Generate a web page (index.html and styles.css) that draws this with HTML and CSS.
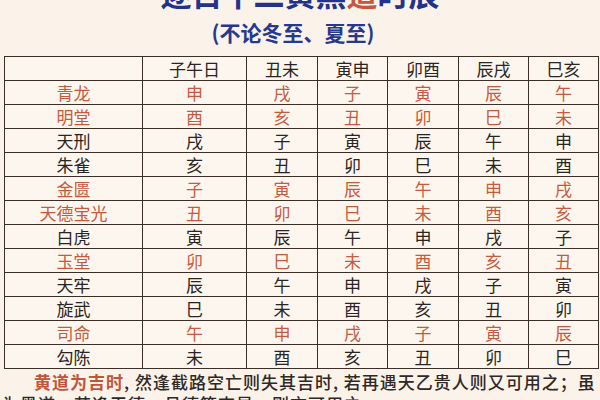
FILE: index.html
```html
<!DOCTYPE html>
<html lang="zh">
<head>
<meta charset="utf-8">
<link rel="stylesheet" href="styles.css">
</head>
<body>
<div class="page">
  <h1 class="title">逐日十二黄黑<span class="hl">道</span>时辰</h1>
  <div class="subtitle">(不论冬至、夏至)</div>
  <table class="grid">
    <colgroup>
      <col class="c1"><col class="c2"><col class="c3"><col class="c4"><col class="c5"><col class="c6"><col class="c7">
    </colgroup>
    <tr><td></td><td>子午日</td><td>丑未</td><td>寅申</td><td>卯酉</td><td>辰戌</td><td>巳亥</td></tr>
    <tr class="red"><td>青龙</td><td>申</td><td>戌</td><td>子</td><td>寅</td><td>辰</td><td>午</td></tr>
    <tr class="red"><td>明堂</td><td>酉</td><td>亥</td><td>丑</td><td>卯</td><td>巳</td><td>未</td></tr>
    <tr><td>天刑</td><td>戌</td><td>子</td><td>寅</td><td>辰</td><td>午</td><td>申</td></tr>
    <tr><td>朱雀</td><td>亥</td><td>丑</td><td>卯</td><td>巳</td><td>未</td><td>酉</td></tr>
    <tr class="red"><td>金匮</td><td>子</td><td>寅</td><td>辰</td><td>午</td><td>申</td><td>戌</td></tr>
    <tr class="red"><td>天德宝光</td><td>丑</td><td>卯</td><td>巳</td><td>未</td><td>酉</td><td>亥</td></tr>
    <tr><td>白虎</td><td>寅</td><td>辰</td><td>午</td><td>申</td><td>戌</td><td>子</td></tr>
    <tr class="red"><td>玉堂</td><td>卯</td><td>巳</td><td>未</td><td>酉</td><td>亥</td><td>丑</td></tr>
    <tr><td>天牢</td><td>辰</td><td>午</td><td>申</td><td>戌</td><td>子</td><td>寅</td></tr>
    <tr><td>旋武</td><td>巳</td><td>未</td><td>酉</td><td>亥</td><td>丑</td><td>卯</td></tr>
    <tr class="red"><td>司命</td><td>午</td><td>申</td><td>戌</td><td>子</td><td>寅</td><td>辰</td></tr>
    <tr><td>勾陈</td><td>未</td><td>酉</td><td>亥</td><td>丑</td><td>卯</td><td>巳</td></tr>
  </table>
  <p class="note"><span class="em">黄道为吉时</span>, 然逢截路空亡则失其吉时, 若再遇天乙贵人则又可用之；虽为黑道，若逢天德、月德等吉星，则亦可用之。</p>
</div>
</body>
</html>
```
FILE: styles.css
```css
html, body {
  margin: 0;
  padding: 0;
  background: #fbf3ea;
  overflow: hidden;
}
.page {
  width: 600px;
  height: 400px;
  overflow: hidden;
  font-family: "Noto Sans CJK SC", "Noto Sans", sans-serif;
  color: #2a2522;
}
.title {
  margin: -22px 0 0 0;
  height: 30px;
  font-size: 31px;
  line-height: 30px;
  font-weight: 700;
  text-align: center;
  color: #23338a;
}
.title .hl {
  color: #c8553d;
}
.subtitle {
  margin-top: 10px;
  padding-right: 14px;
  height: 28px;
  font-size: 21px;
  line-height: 28px;
  font-weight: 700;
  text-align: center;
  color: #27388f;
}
.grid {
  margin: 10px 0 0 4px;
  width: 594px;
  border-collapse: collapse;
  table-layout: fixed;
  background: #fdf6ee;
}
.c1 { width: 138px; }
.c2 { width: 104px; }
.c3 { width: 71px; }
.c4 { width: 70px; }
.c5 { width: 71px; }
.c6 { width: 70px; }
.c7 { width: 70px; }
.grid td {
  border: 1.5px solid #3b2f28;
  height: 23px;
  padding: 0;
  text-align: center;
  vertical-align: middle;
  font-size: 17px;
  line-height: 20px;
  color: #2a2522;
}
.grid tr.red td {
  color: #c65a40;
}
.note {
  margin: 2px 0 0 0;
  padding: 0 2px;
  text-indent: 32px;
  font-size: 17px;
  line-height: 22px;
  letter-spacing: 1px;
  font-weight: 500;
  color: #2e2926;
}
.note .em {
  color: #c0553a;
  font-weight: 700;
}
```
